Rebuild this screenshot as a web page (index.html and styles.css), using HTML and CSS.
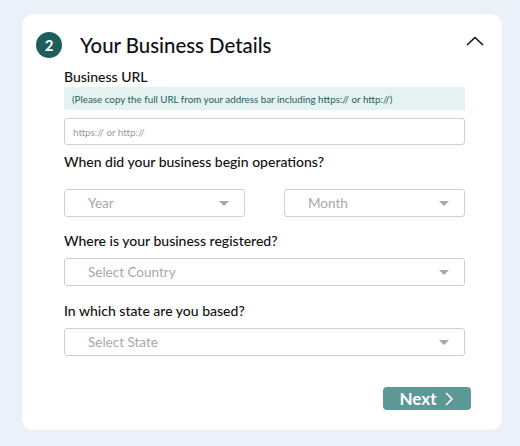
FILE: index.html
```html
<!DOCTYPE html>
<html>
<head>
<meta charset="utf-8">
<link rel="stylesheet" href="styles.css">
</head>
<body>
<div class="card">
  <div class="head">
    <span class="step">2</span>
    <h1 class="title">Your Business Details</h1>
    <svg class="caret" width="18" height="10" viewBox="0 0 18 10"><path d="M1 9 L9 1.5 L17 9" fill="none" stroke="#111" stroke-width="1.6"/></svg>
  </div>
  <div class="body">
    <div class="label first">Business URL</div>
    <div class="hint">(Please copy the full URL from your address bar including https:// or http://)</div>
    <div class="input">https:// or http://</div>

    <div class="label q">When did your business begin operations?</div>
    <div class="row">
      <div class="select"><span>Year</span><i class="tri"></i></div>
      <div class="select"><span>Month</span><i class="tri"></i></div>
    </div>

    <div class="label q2">Where is your business registered?</div>
    <div class="select full"><span>Select Country</span><i class="tri"></i></div>

    <div class="label q3">In which state are you based?</div>
    <div class="select full"><span>Select State</span><i class="tri"></i></div>

    <div class="actions">
      <button class="next">Next <svg width="10" height="16" viewBox="0 0 10 16"><path d="M2 2 L8 8 L2 14" fill="none" stroke="#fff" stroke-width="1.5"/></svg></button>
    </div>
  </div>
</div>
</body>
</html>
```
FILE: styles.css
```css
* { box-sizing: border-box; }
html, body { margin: 0; padding: 0; }
body {
  background: #eaf1f9;
  font-family: "Lato", "Liberation Sans", sans-serif;
  color: #111;
  width: 520px;
  height: 446px;
  padding: 14px 18px 0 22px;
}
.card {
  background: #fff;
  border-radius: 12px;
  width: 480px;
  height: 416px;
  padding: 18px 0 0 14px;
}
.head {
  display: flex;
  align-items: center;
  height: 26px;
}
.step {
  width: 26px;
  height: 26px;
  border-radius: 50%;
  background: #1b5e5b;
  color: #fff;
  font-weight: 700;
  font-size: 15px;
  display: flex;
  align-items: center;
  justify-content: center;
}
.title {
  margin: 0 0 0 18px;
  font-size: 20.4px;
  font-weight: 500;
  flex: 1;
}
.caret { margin-right: 18px; margin-top: -8px; }
.body {
  padding-left: 28px;
  width: 429px;
}
.label {
  font-size: 14px;
  font-weight: 500;
  line-height: 16px;
}
.first { margin-top: 11px; }
.hint {
  margin-top: 2px;
  background: #e4f3f1;
  color: #1d5f5c;
  font-size: 9.8px;
  height: 23px;
  padding: 0 8px;
  display: flex;
  align-items: center;
  width: 401px;
}
.input {
  margin-top: 8px;
  width: 401px;
  height: 27px;
  border: 1px solid #cfcfcf;
  border-radius: 3px;
  color: #9a9a9a;
  font-size: 9.8px;
  padding: 0 8px;
  display: flex;
  align-items: center;
}
.q { margin-top: 9px; }
.q2 { margin-top: 16px; }
.q3 { margin-top: 17px; }
.row {
  display: flex;
  gap: 39px;
  margin-top: 19px;
  width: 401px;
}
.select {
  flex: 1;
  height: 28px;
  border: 1px solid #cfcfcf;
  border-radius: 3px;
  display: flex;
  align-items: center;
  justify-content: space-between;
  padding: 0 15px 0 23px;
  color: #a8a8a8;
  font-size: 13.5px;
}
.select.full { width: 401px; margin-top: 9px; flex: none; }
.tri {
  width: 0; height: 0;
  border-left: 5px solid transparent;
  border-right: 5px solid transparent;
  border-top: 5px solid #a8a8a8;
}
.actions {
  display: flex;
  justify-content: flex-end;
  margin-top: 31px;
  width: 407px;
}
.next {
  background: #5b9896;
  color: #fff;
  border: none;
  border-radius: 4px;
  width: 88px;
  height: 23px;
  font-family: inherit;
  font-weight: 700;
  font-size: 17px;
  display: flex;
  align-items: center;
  justify-content: center;
  gap: 8px;
  padding: 0;
}
```
